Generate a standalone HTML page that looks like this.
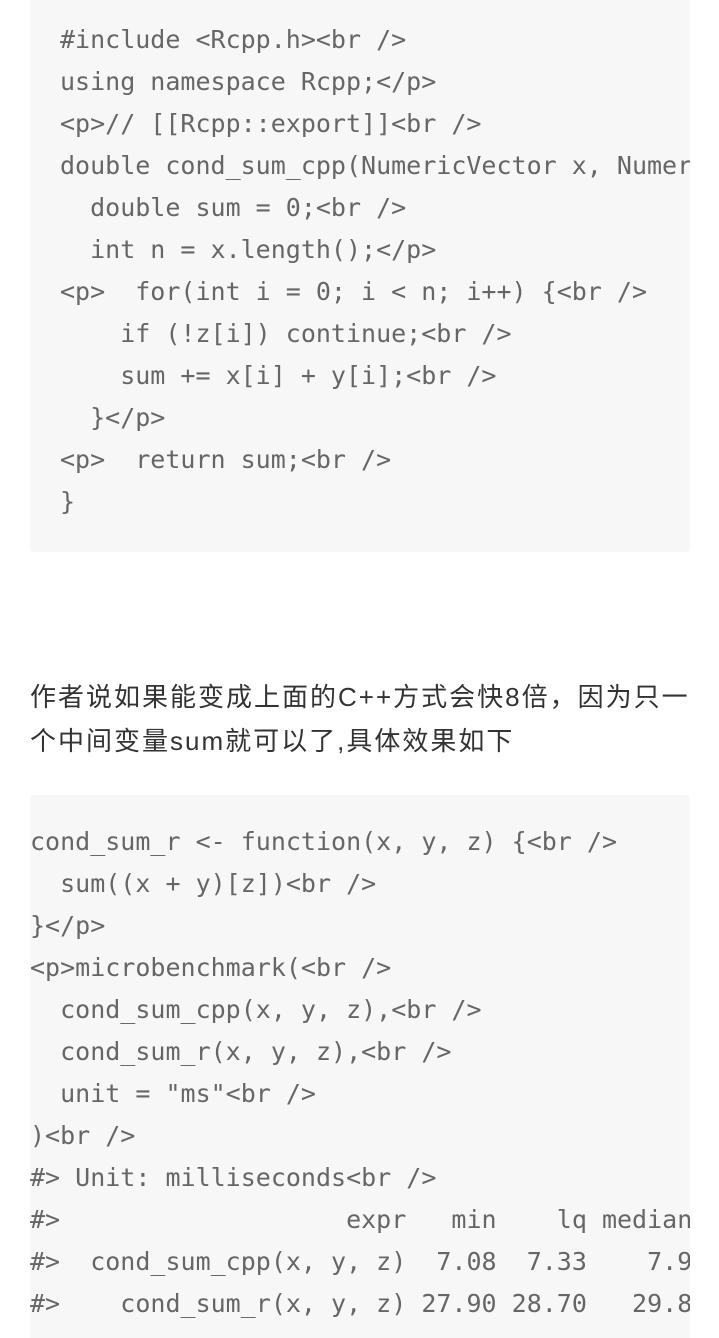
<!DOCTYPE html>
<html><head><meta charset="utf-8"><style>
html,body{margin:0;padding:0;background:#fff;width:719px;height:1338px;overflow:hidden;position:relative}
.blk{position:absolute;left:30px;width:660px;background:#f7f7f7;border-radius:4px;overflow:hidden}
pre{margin:0;position:absolute;font-family:"DejaVu Sans Mono","Liberation Mono",monospace;font-size:25px;line-height:42px;color:#666;white-space:pre}
.p{position:absolute;left:30px;top:675px;width:689px;font-family:"Liberation Sans","Noto Sans CJK SC",sans-serif;font-size:26px;line-height:44px;color:#333;white-space:nowrap;letter-spacing:2px}
</style></head><body>
<div class="blk" style="top:-10px;height:562px">
<pre style="left:30px;top:29px">#include &lt;Rcpp.h&gt;&lt;br /&gt;
using namespace Rcpp;&lt;/p&gt;
&lt;p&gt;// [[Rcpp::export]]&lt;br /&gt;
double cond_sum_cpp(NumericVector x, NumericVector y, LogicalVector z) {&lt;br /&gt;
  double sum = 0;&lt;br /&gt;
  int n = x.length();&lt;/p&gt;
&lt;p&gt;  for(int i = 0; i &lt; n; i++) {&lt;br /&gt;
    if (!z[i]) continue;&lt;br /&gt;
    sum += x[i] + y[i];&lt;br /&gt;
  }&lt;/p&gt;
&lt;p&gt;  return sum;&lt;br /&gt;
}</pre>
</div>
<div class="p">作者说如果能变成上面的C++方式会快8倍，因为只一<br>个中间变量sum就可以了,具体效果如下</div>
<div class="blk" style="top:795px;height:560px">
<pre style="left:0;top:26px">cond_sum_r &lt;- function(x, y, z) {&lt;br /&gt;
  sum((x + y)[z])&lt;br /&gt;
}&lt;/p&gt;
&lt;p&gt;microbenchmark(&lt;br /&gt;
  cond_sum_cpp(x, y, z),&lt;br /&gt;
  cond_sum_r(x, y, z),&lt;br /&gt;
  unit = "ms"&lt;br /&gt;
)&lt;br /&gt;
#&gt; Unit: milliseconds&lt;br /&gt;
#&gt;                   expr   min    lq median     uq   max neval
#&gt;  cond_sum_cpp(x, y, z)  7.08  7.33    7.97   8.37  9.63   100
#&gt;    cond_sum_r(x, y, z) 27.90 28.70   29.80  30.90 35.20   100</pre>
</div>
</body></html>
